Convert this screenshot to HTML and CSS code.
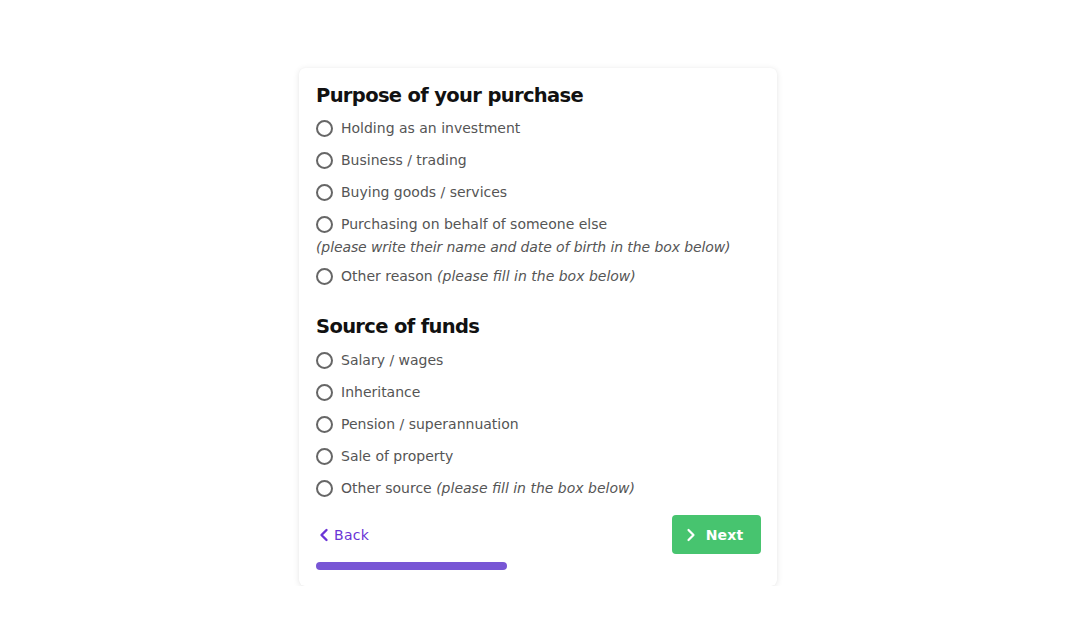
FILE: index.html
```html
<!DOCTYPE html>
<html>
<head>
<meta charset="utf-8">
<link rel="stylesheet" href="styles.css">
</head>
<body>
<div class="card">
  <h2 class="title">Purpose of your purchase</h2>
  <div class="row"><span class="radio"></span><span class="label">Holding as an investment</span></div>
  <div class="row"><span class="radio"></span><span class="label">Business / trading</span></div>
  <div class="row"><span class="radio"></span><span class="label">Buying goods / services</span></div>
  <div class="row"><span class="radio"></span><span class="label">Purchasing on behalf of someone else</span></div>
  <div class="note">(please write their name and date of birth in the box below)</div>
  <div class="row after-note"><span class="radio"></span><span class="label">Other reason <em>(please fill in the box below)</em></span></div>

  <h2 class="title second">Source of funds</h2>
  <div class="row"><span class="radio"></span><span class="label">Salary / wages</span></div>
  <div class="row"><span class="radio"></span><span class="label">Inheritance</span></div>
  <div class="row"><span class="radio"></span><span class="label">Pension / superannuation</span></div>
  <div class="row"><span class="radio"></span><span class="label">Sale of property</span></div>
  <div class="row"><span class="radio"></span><span class="label">Other source <em>(please fill in the box below)</em></span></div>

  <div class="footer">
    <a class="back"><svg width="10" height="14" viewBox="0 0 10 14"><path d="M7.5 2 L2.5 7 L7.5 12" fill="none" stroke="currentColor" stroke-width="2.4" stroke-linecap="round" stroke-linejoin="round"/></svg>Back</a>
    <button class="next"><svg width="10" height="14" viewBox="0 0 10 14"><path d="M2.5 2 L7.5 7 L2.5 12" fill="none" stroke="currentColor" stroke-width="2.2" stroke-linecap="round" stroke-linejoin="round"/></svg>Next</button>
  </div>
  <div class="progress"></div>
</div>
</body>
</html>
```
FILE: styles.css
```css
html, body {
  margin: 0;
  padding: 0;
  background: #ffffff;
}
body {
  font-family: "DejaVu Sans", "Noto Sans", sans-serif;
}
.card {
  width: 478px;
  box-sizing: border-box;
  margin: 68px 0 0 299px;
  padding: 14px 16px 16px 17px;
  background: #fff;
  border-radius: 6px;
  box-shadow: 0 1px 6px rgba(0, 0, 0, 0.10), 0 0 1px rgba(0,0,0,0.06);
}
.title {
  margin: 0 0 2px 0;
  font-size: 19.5px;
  line-height: 28px;
  font-weight: 700;
  color: #111;
  letter-spacing: -0.65px;
}
.title.second {
  margin-top: 21px;
  margin-bottom: 3px;
}
.row {
  display: flex;
  align-items: center;
  height: 32px;
}
.radio {
  width: 13px;
  height: 13px;
  border: 2px solid #666;
  border-radius: 50%;
  flex: none;
  margin-right: 8px;
}
.label {
  font-size: 14px;
  color: #555;
  letter-spacing: 0;
}
.label em, .note {
  font-style: italic;
}
.note {
  margin-top: -4px;
  line-height: 22px;
  font-size: 14px;
  color: #555;
  letter-spacing: -0.1px;
}
.row.after-note {
  margin-top: 2px;
}
.footer {
  margin-top: 11px;
  display: flex;
  justify-content: space-between;
  align-items: center;
}
.back {
  display: flex;
  align-items: center;
  gap: 5px;
  margin-left: 3px;
  color: #6a34d6;
  font-size: 14px;
  letter-spacing: 0.3px;
}
.next {
  width: 89px;
  height: 39px;
  border: none;
  border-radius: 4px;
  background: #47c46f;
  color: #fff;
  font-family: "DejaVu Sans", sans-serif;
  font-weight: 700;
  font-size: 14px;
  letter-spacing: 0.2px;
  display: flex;
  align-items: center;
  justify-content: center;
  gap: 10px;
  padding: 0 4px 0 0;
}
.progress {
  margin-top: 8px;
  width: 191px;
  height: 8px;
  border-radius: 4px;
  background: #7856d5;
}
```
